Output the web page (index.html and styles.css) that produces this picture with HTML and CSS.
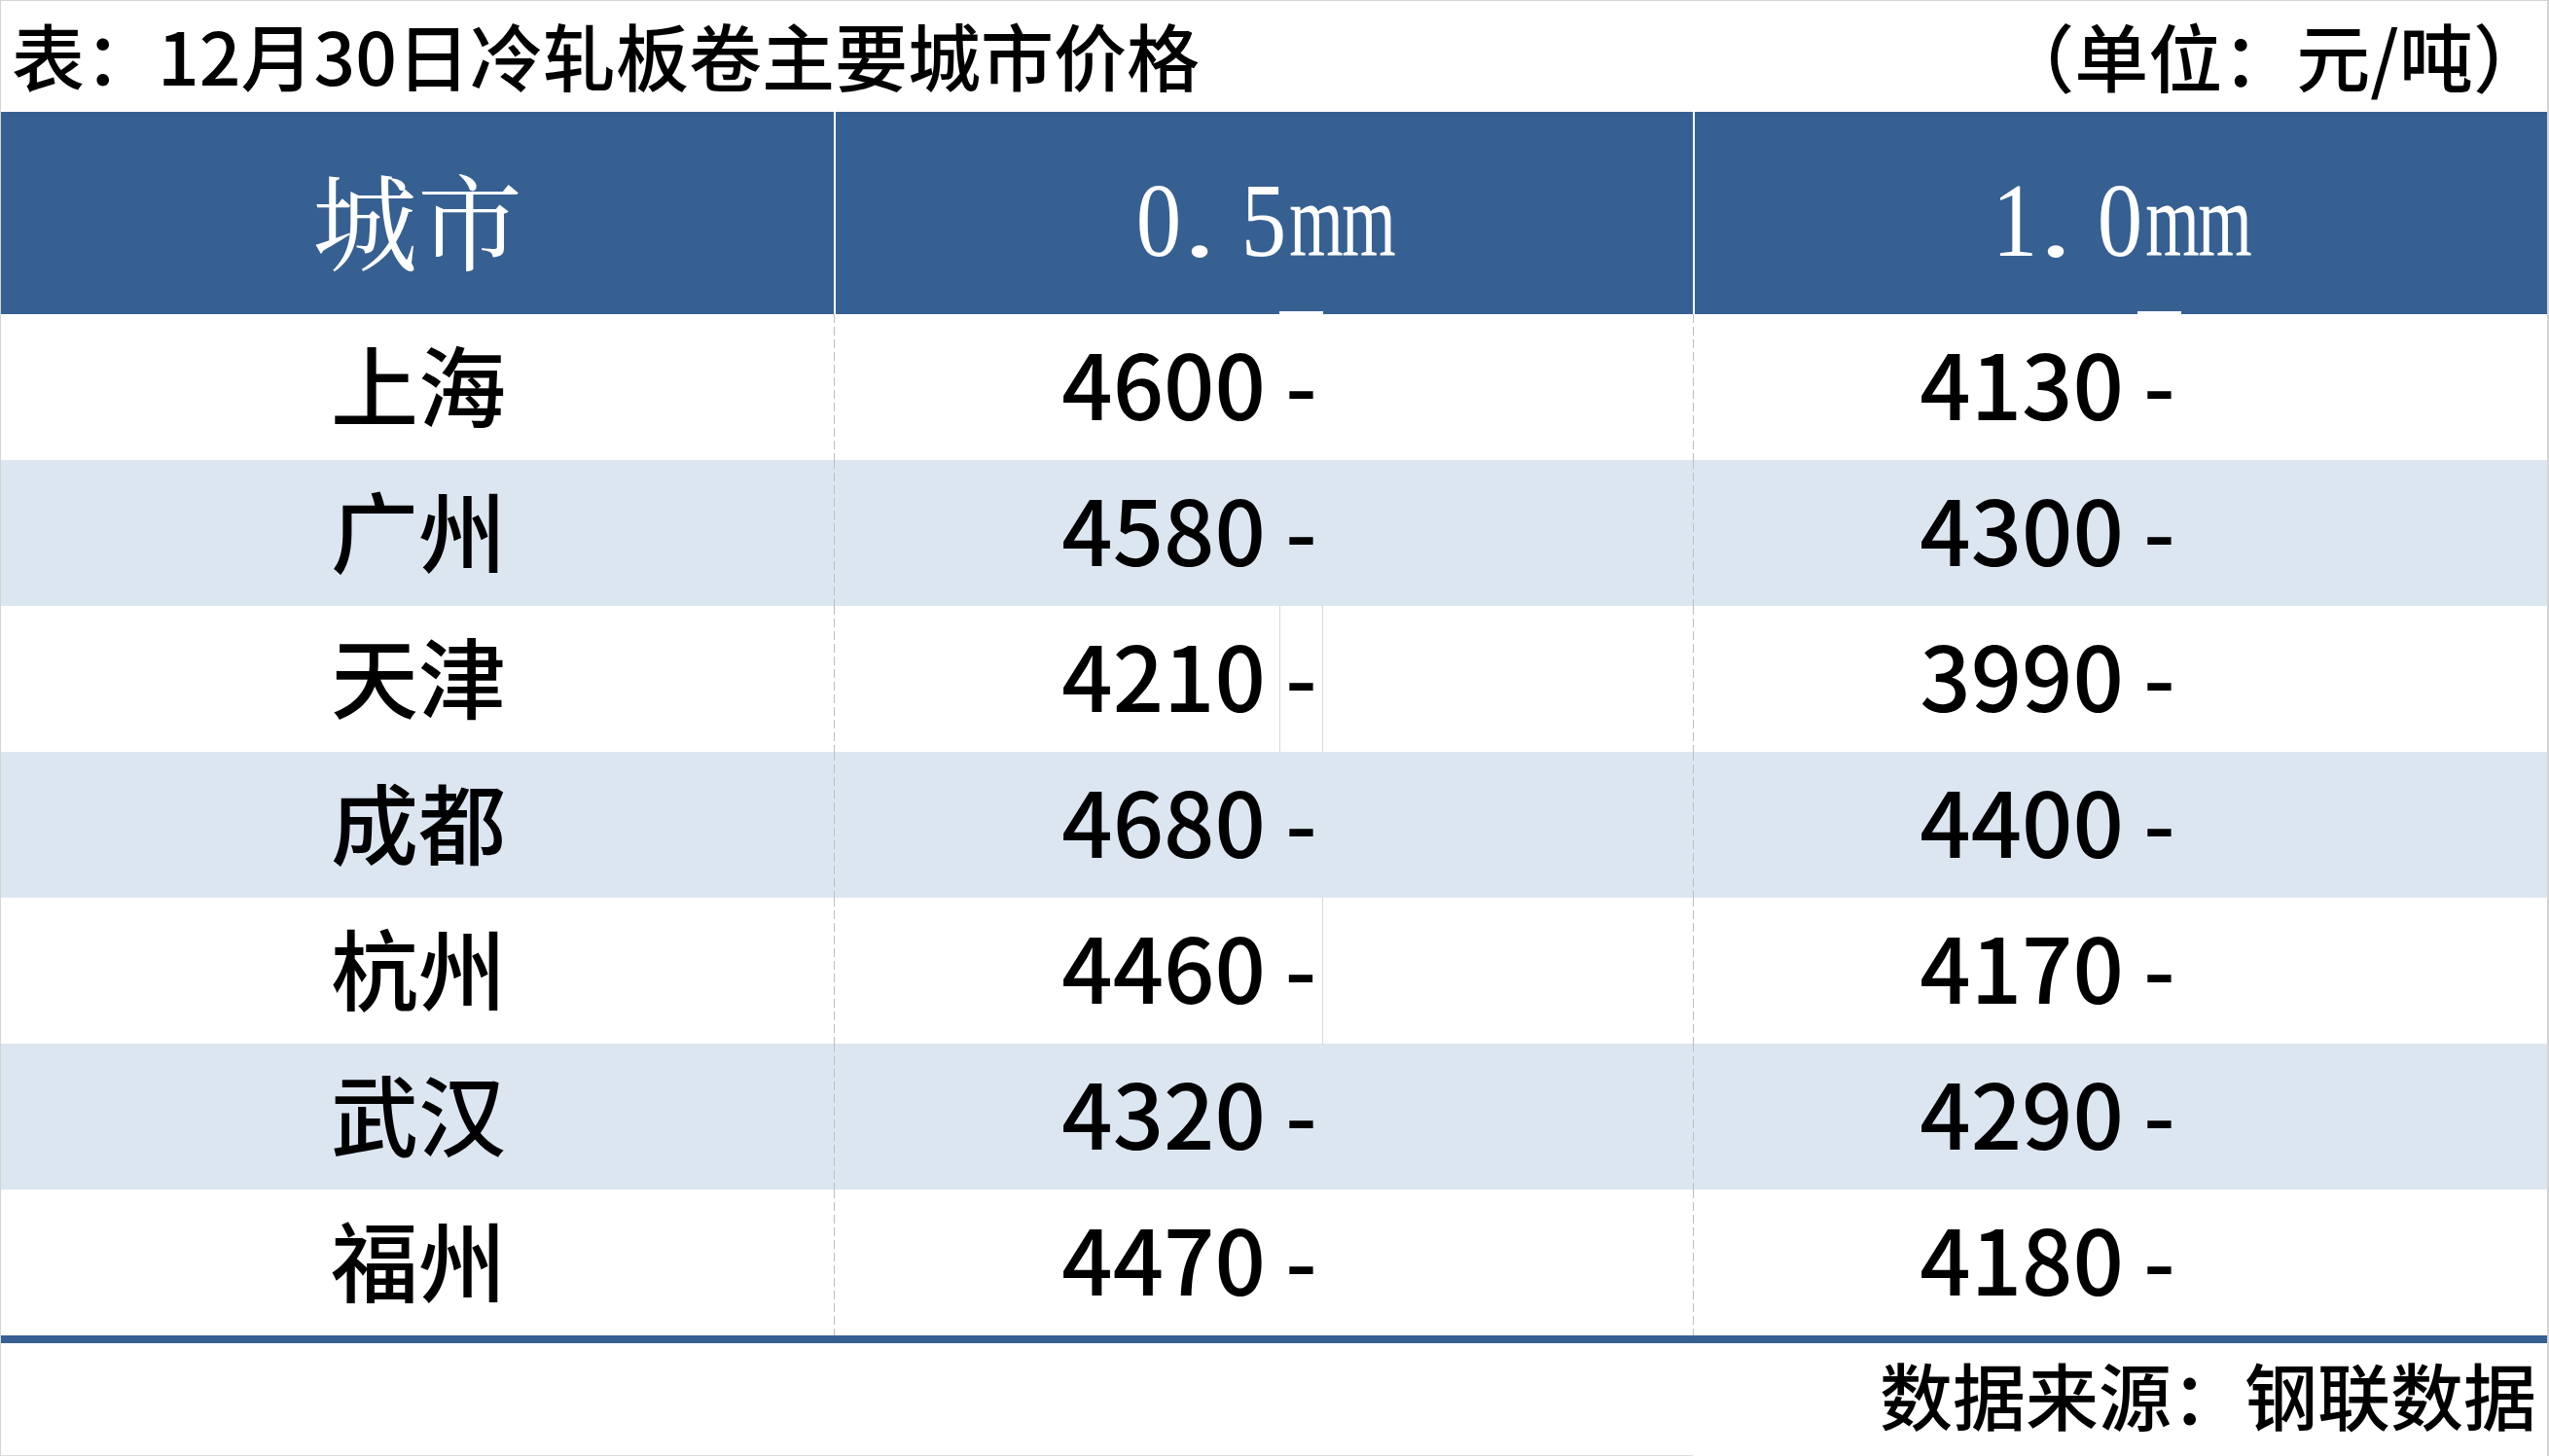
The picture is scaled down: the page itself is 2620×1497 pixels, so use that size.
FILE: index.html
```html
<!DOCTYPE html>
<html lang="zh-CN">
<head>
<meta charset="utf-8">
<title>12月30日冷轧板卷主要城市价格</title>
<link rel="stylesheet" href="styles.css">
</head>
<body>
<div class="sheet">
  <div class="title-row">
    <span class="title">表：12月30日冷轧板卷主要城市价格</span>
    <span class="unit">（单位：元/吨）</span>
  </div>

  <div class="row head">
    <div class="hcell c1"><span class="hz">城市</span></div>
    <div class="hcell c2 sep"><span class="lat"><span class="g d">0</span><span class="g dot">.</span><span class="g d">5</span><span class="g m">m</span><span class="g m">m</span></span></div>
    <div class="hcell c3 sep"><span class="lat"><span class="g d">1</span><span class="g dot">.</span><span class="g d">0</span><span class="g m">m</span><span class="g m">m</span></span></div>
  </div>

  <div class="row">
    <div class="city">上海</div>
    <div class="val dash-sep"><span class="num">4600</span><span class="dash notch">-</span><span class="rest"></span></div>
    <div class="val dash-sep"><span class="num">4130</span><span class="dash notch">-</span><span class="rest"></span></div>
  </div>
  <div class="row alt">
    <div class="city">广州</div>
    <div class="val dash-sep"><span class="num">4580</span><span class="dash">-</span><span class="rest"></span></div>
    <div class="val dash-sep"><span class="num">4300</span><span class="dash">-</span><span class="rest"></span></div>
  </div>
  <div class="row">
    <div class="city">天津</div>
    <div class="val dash-sep"><span class="num">4210</span><span class="dash bl br">-</span><span class="rest"></span></div>
    <div class="val dash-sep"><span class="num">3990</span><span class="dash">-</span><span class="rest"></span></div>
  </div>
  <div class="row alt">
    <div class="city">成都</div>
    <div class="val dash-sep"><span class="num">4680</span><span class="dash">-</span><span class="rest"></span></div>
    <div class="val dash-sep"><span class="num">4400</span><span class="dash">-</span><span class="rest"></span></div>
  </div>
  <div class="row">
    <div class="city">杭州</div>
    <div class="val dash-sep"><span class="num">4460</span><span class="dash br">-</span><span class="rest"></span></div>
    <div class="val dash-sep"><span class="num">4170</span><span class="dash">-</span><span class="rest"></span></div>
  </div>
  <div class="row alt">
    <div class="city">武汉</div>
    <div class="val dash-sep"><span class="num">4320</span><span class="dash">-</span><span class="rest"></span></div>
    <div class="val dash-sep"><span class="num">4290</span><span class="dash">-</span><span class="rest"></span></div>
  </div>
  <div class="row">
    <div class="city">福州</div>
    <div class="val dash-sep"><span class="num">4470</span><span class="dash">-</span><span class="rest"></span></div>
    <div class="val dash-sep"><span class="num">4180</span><span class="dash">-</span><span class="rest"></span></div>
  </div>

  <div class="rule"></div>

  <div class="foot">
    <div class="fcell lined"></div>
    <div class="fcell lined"></div>
    <div class="fcell source">数据来源：钢联数据</div>
  </div>
</div>
</body>
</html>
```

FILE: styles.css
```css
html, body {
  margin: 0;
  padding: 0;
  background: #ffffff;
}

.sheet {
  width: 2620px;
  height: 1497px;
  box-sizing: border-box;
  border-top: 1px solid #d4d4d4;
  border-left: 1px solid #d4d4d4;
  border-right: 2px solid #d4d4d4;
  display: flex;
  flex-direction: column;
  font-family: "Noto Sans CJK SC", "Noto Sans", sans-serif;
  color: #000000;
  overflow: hidden;
}

.title-row {
  height: 114px;
  flex: none;
  display: flex;
  align-items: flex-start;
  justify-content: space-between;
  padding: 0 0 0 11px;
  box-sizing: border-box;
  line-height: normal;
}

.title {
  font-size: 75px;
  font-weight: 500;
}

.unit {
  font-size: 76px;
  font-weight: 500;
}

.row {
  flex: none;
  height: 150px;
  display: grid;
  grid-template-columns: 856px 883px 1fr;
}

.row.alt {
  background: #dce6f1;
}

.row.head {
  height: 208px;
  background: #376092;
  color: #ffffff;
}

.hcell {
  position: relative;
  display: flex;
  align-items: center;
  justify-content: center;
  padding-top: 16px;
  box-sizing: border-box;
  line-height: 1;
}

.hcell.c1 {
  padding-top: 10px;
}

.hcell.sep::before {
  content: "";
  position: absolute;
  left: 0;
  top: 0;
  bottom: 0;
  width: 2px;
  background: #ffffff;
}

.hz {
  font-family: "Noto Serif CJK SC", "AR PL UMing CN", "Noto Serif CJK JP", "Liberation Serif", serif;
  font-size: 108px;
  font-weight: 400;
}

.lat {
  display: flex;
  font-family: "Liberation Serif", "DejaVu Serif", serif;
  font-size: 108px;
  font-weight: 400;
}

.g {
  display: inline-flex;
  justify-content: center;
  width: 0.5em;
}

.g.d {
  transform: scaleX(0.86);
}

.g.dot {
  transform: translateX(-12px) scaleX(1.3);
}

.g.m {
  transform: scaleX(0.66);
}

.city {
  display: flex;
  align-items: center;
  justify-content: center;
  font-size: 90px;
  font-weight: 500;
  line-height: 1;
  padding: 0 0 10px 2px;
}

.val {
  position: relative;
  display: grid;
  grid-template-columns: 458px 45px 1fr;
  font-size: 92px;
  font-weight: 500;
  line-height: 1;
}

.row .val + .val {
  grid-template-columns: 457px 45px 1fr;
}

.dash-sep::before {
  content: "";
  position: absolute;
  left: 0;
  top: 0;
  bottom: 0;
  width: 1px;
  background: repeating-linear-gradient(to bottom, #bdbdbd 0 9px, transparent 9px 13px);
}

.num {
  display: flex;
  align-items: center;
  justify-content: flex-end;
  padding: 0 14px 12px 0;
}

.dash {
  position: relative;
  display: flex;
  align-items: center;
  justify-content: center;
  box-sizing: border-box;
  padding-bottom: 12px;
}

.dash.notch::before {
  content: "";
  position: absolute;
  left: 0;
  right: 0;
  top: -3px;
  height: 3px;
  background: #ffffff;
}

.dash.bl {
  border-left: 1px solid #d9d9d9;
}

.dash.br {
  border-right: 1px solid #d9d9d9;
}

.rule {
  flex: none;
  height: 8px;
  background: #376092;
}

.foot {
  flex: none;
  height: 116px;
  display: grid;
  grid-template-columns: 856px 883px 1fr;
}

.fcell.lined {
  border-bottom: 1px solid #dcdcdc;
}

.source {
  display: flex;
  align-items: center;
  justify-content: flex-end;
  padding-right: 11px;
  padding-bottom: 14px;
  font-size: 75px;
  font-weight: 500;
  line-height: 1;
}
```
